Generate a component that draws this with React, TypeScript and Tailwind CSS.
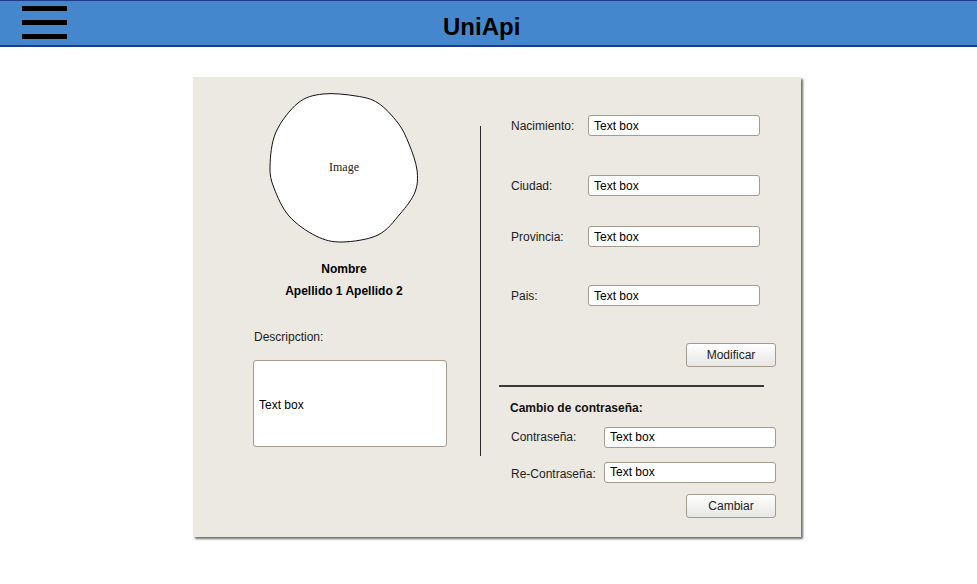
import type { ReactNode } from 'react'

const font = { fontFamily: '"Liberation Sans", Arial, sans-serif' }

// hand-drawn looking outline of the picture placeholder
const blob: [number, number][] = [
  [55, 2], [88, 4], [110, 11], [130, 31], [141, 52], [149, 78], [147, 100], [132, 122], [110, 143],
  [74, 150], [48, 144], [21, 124], [6, 96], [2, 74], [8, 40], [30, 11],
]

function smoothPath(pts: [number, number][]) {
  const n = pts.length
  let d = `M${pts[0][0]},${pts[0][1]}`
  for (let i = 0; i < n; i++) {
    const p0 = pts[(i - 1 + n) % n]
    const p1 = pts[i]
    const p2 = pts[(i + 1) % n]
    const p3 = pts[(i + 2) % n]
    const c1x = p1[0] + (p2[0] - p0[0]) / 6
    const c1y = p1[1] + (p2[1] - p0[1]) / 6
    const c2x = p2[0] - (p3[0] - p1[0]) / 6
    const c2y = p2[1] - (p3[1] - p1[1]) / 6
    d += ` C${c1x.toFixed(1)},${c1y.toFixed(1)} ${c2x.toFixed(1)},${c2y.toFixed(1)} ${p2[0]},${p2[1]}`
  }
  return d + 'Z'
}

function TextBox({ className = '' }: { className?: string }) {
  return (
    <div
      className={`h-[21px] w-[172px] bg-white border border-[#a49c8e] rounded-[3px] flex items-center pl-[5px] text-[12px] text-black ${className}`}
    >
      Text box
    </div>
  )
}

function Button({ children }: { children: ReactNode }) {
  return (
    <div className="h-[24px] w-[90px] rounded-[3px] border border-[#a39b8d] bg-gradient-to-b from-white to-[#e6e6e4] flex items-center justify-center text-[12px] text-[#222]">
      {children}
    </div>
  )
}

function Field({ label, labelWidth, className = '' }: { label: string; labelWidth: string; className?: string }) {
  return (
    <div className={`flex items-center ${className}`}>
      <span className={`${labelWidth} text-[12px] text-[#222]`}>{label}</span>
      <TextBox />
    </div>
  )
}

export default function App() {
  return (
    <div className="min-h-screen bg-white" style={font}>
      {/* Top bar */}
      <header className="h-[47px] bg-[#4487cd] border-t border-b-2 border-[#1f3b8c] flex items-start">
        <div className="ml-[22px] mt-[5px] w-[45px] flex flex-col gap-[9px]">
          <div className="h-[5px] bg-black" />
          <div className="h-[5px] bg-black" />
          <div className="h-[5px] bg-black" />
        </div>
        <h1 className="ml-[376px] mt-[12px] text-[24px] leading-[28px] font-bold text-black">UniApi</h1>
      </header>

      {/* Profile panel */}
      <div className="ml-[193px] mt-[30px] w-[608px] h-[460px] bg-[#ece9e3] shadow-[2px_2px_2px_#6f6f6f] flex">
        {/* Left column */}
        <div className="w-[287px] pl-[15px] pt-[16px] flex flex-col items-center">
          <div className="relative w-[152px] h-[152px] -mt-[1px] flex items-center justify-center">
            <svg className="absolute inset-0" width="152" height="152" viewBox="0 0 152 152">
              <path d={smoothPath(blob)} fill="white" stroke="#111" strokeWidth="1" />
            </svg>
            <span className="relative text-[12px] text-[#222] -mt-[2px]" style={{ fontFamily: '"Liberation Serif", serif' }}>
              Image
            </span>
          </div>
          <p className="mt-[17px] text-[12px] leading-[16px] font-bold text-black">Nombre</p>
          <p className="mt-[6px] text-[12px] leading-[16px] font-bold text-black">Apellido 1 Apellido 2</p>
          <div className="self-start ml-[45px] mt-[30px]">
            <p className="text-[12px] leading-[16px] text-[#222] pl-[1px]">Descripction:</p>
            <div className="mt-[15px] w-[194px] h-[87px] bg-white border border-[#a49c8e] rounded-[3px] flex items-center pl-[5px] pt-[2px] text-[12px] text-black">
              Text box
            </div>
          </div>
        </div>

        {/* Divider */}
        <div className="w-px mt-[49px] h-[330px] bg-[#2a2a2a]" />

        {/* Right column */}
        <div className="flex-1 pt-[38px] flex flex-col">
          <div className="pl-[30px]">
            <Field label="Nacimiento:" labelWidth="w-[77px]" />
            <Field label="Ciudad:" labelWidth="w-[77px]" className="mt-[39px]" />
            <Field label="Provincia:" labelWidth="w-[77px]" className="mt-[30px]" />
            <Field label="Pais:" labelWidth="w-[77px]" className="mt-[38px]" />
          </div>
          <div className="mt-[37px] pr-[25px] flex justify-end">
            <Button>Modificar</Button>
          </div>
          <div className="mt-[18px] ml-[18px] w-[265px] h-[1.5px] bg-[#3a3a3a]" />
          <div className="pl-[29px] mt-[13px]">
            <p className="text-[12px] leading-[16px] font-bold text-[#111]">Cambio de contraseña:</p>
          </div>
          <div className="pl-[30px]">
            <Field label="Contraseña:" labelWidth="w-[93px]" className="mt-[11px]" />
            <Field label="Re-Contraseña:" labelWidth="w-[93px] pt-[3px]" className="mt-[14px]" />
          </div>
          <div className="mt-[11px] pr-[25px] flex justify-end">
            <Button>Cambiar</Button>
          </div>
        </div>
      </div>
    </div>
  )
}
